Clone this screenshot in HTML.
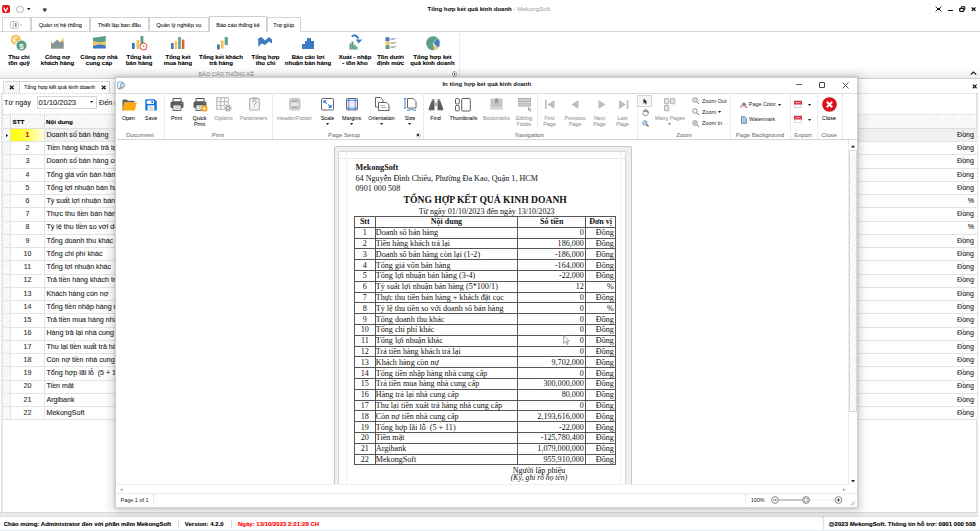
<!DOCTYPE html>
<html><head><meta charset="utf-8">
<style>
*{box-sizing:border-box}
html,body{margin:0;padding:0}
body{width:980px;height:531px;overflow:hidden;position:relative;background:#fff;font-family:"Liberation Sans",sans-serif;color:#222}
.a{position:absolute}
.t{position:absolute;white-space:pre;line-height:1}
.c{transform:translateX(-50%)}
svg{position:absolute;overflow:visible}
/* tabs */
.tab{position:absolute;top:17px;height:15px;border:1px solid #d4d4d4;border-bottom:none;background:#fff;font-size:5.6px;text-align:center;line-height:14px;color:#111;-webkit-text-stroke:0.06px #111}
.rl{position:absolute;font-weight:bold;font-size:6px;line-height:6.3px;text-align:center;white-space:nowrap;color:#000;-webkit-text-stroke:0.1px #000;transform:translateX(-50%);top:54px}
.tl{position:absolute;font-size:5.4px;line-height:6.8px;text-align:center;white-space:nowrap;color:#111;-webkit-text-stroke:0.06px #111;transform:translateX(-50%);top:115px}
.tl.g{color:#a0a0a0;-webkit-text-stroke:0.1px #a0a0a0}
.gl{position:absolute;font-size:6.1px;line-height:6px;white-space:nowrap;color:#7c7c7c;-webkit-text-stroke:0.08px #7c7c7c;transform:translateX(-50%);top:132.5px}
.sep{position:absolute;top:95px;height:44px;width:0;border-left:1px dotted #d0d0d0}
.grow{position:absolute;left:3px;width:974px;height:13.27px;border-bottom:1px solid #e3e3e3;font-size:7px}
</style></head><body>

<!-- ===== TITLE BAR ===== -->
<div class="a" style="left:2px;top:5px;width:8px;height:8px;background:#e3141c;border-radius:2px"></div>
<svg style="left:3.3px;top:6.8px" width="6" height="5"><path d="M0.6 0.5L2.7 4.3L4.8 0.5" fill="none" stroke="#fff" stroke-width="1.3"/></svg>
<div class="a" style="left:16px;top:5.5px;width:7.5px;height:7.5px;border:0.8px solid #b5b5b5;border-radius:50%"></div>
<svg style="left:27px;top:8px" width="4" height="3"><path d="M0 0H3.5L1.75 2.2Z" fill="#222"/></svg>
<svg style="left:43px;top:7.5px" width="4" height="4"><path d="M0 0.6H3.6M0 1.4H3.6L1.8 3.6Z" stroke="#222" stroke-width="0.6" fill="#222"/></svg>
<div class="t" style="left:427.5px;top:6px;font-size:6px;color:#111"><b style="-webkit-text-stroke:0.08px #111">Tổng hợp kết quả kinh doanh</b> <span style="color:#9a9a9a;font-size:6.2px">- MekongSoft</span></div>
<!-- window controls -->
<svg style="left:935px;top:6px" width="7" height="6"><path d="M0.6 0.6L2.4 2.2M6.4 0.6L4.6 2.2M0.6 5.4L2.4 3.8M6.4 5.4L4.6 3.8" stroke="#111" stroke-width="0.9"/><rect x="2" y="2" width="3" height="2" fill="#111"/></svg>
<div class="a" style="left:947.8px;top:9.6px;width:4.8px;height:1.3px;background:#111"></div>
<svg style="left:959px;top:5.8px" width="7" height="6"><path d="M2.5 1.8V0.7H5.8V3.6H4.8" fill="none" stroke="#111" stroke-width="1"/><rect x="0.7" y="2.3" width="4" height="3" rx="0.5" fill="none" stroke="#111" stroke-width="1.2"/></svg>
<svg style="left:971px;top:6.8px" width="6" height="5"><path d="M0.7 0.5L4.5 3.8M4.5 0.5L0.7 3.8" stroke="#111" stroke-width="1.2"/></svg>

<!-- ===== TABS ===== -->
<div class="tab" style="left:2px;width:28.5px"><svg style="left:7px;top:2.5px" width="14" height="8"><rect x="0.5" y="0.5" width="8" height="7" rx="1.8" fill="none" stroke="#bbb" stroke-width="0.8"/><path d="M3.3 0.5V7.5" stroke="#999" stroke-width="0.7"/><rect x="5" y="2" width="1.6" height="4" fill="#888"/><path d="M9.8 3.2L11 4.6L12.2 3.2" fill="none" stroke="#aaa" stroke-width="0.6"/></svg></div>
<div class="tab" style="left:31px;width:58.5px">Quản trị hệ thống</div>
<div class="tab" style="left:90px;width:58.5px">Thiết lập ban đầu</div>
<div class="tab" style="left:148.5px;width:60.5px">Quản lý nghiệp vụ</div>
<div class="a" style="left:0;top:31px;width:980px;height:1px;background:#d4d4d4"></div>
<div class="tab" style="left:209px;width:58px;top:16px;height:16px;line-height:16px;border-color:#cfcfcf">Báo cáo thống kê</div>
<div class="tab" style="left:267px;width:33.5px">Trợ giúp</div>

<!-- ===== RIBBON ===== -->
<div class="a" style="left:0;top:67px;width:980px;height:11px;background:linear-gradient(#fff,#ededed)"></div>
<div class="a" style="left:0;top:78px;width:980px;height:1px;background:#cfcfcf"></div>
<div class="t" style="left:198.5px;top:71.5px;font-size:5.4px;color:#999;letter-spacing:0.1px;-webkit-text-stroke:0.1px #999">BÁO CÁO THỐNG KÊ</div>
<div class="a" style="left:459px;top:34px;width:0;height:42px;border-left:1px dotted #d8d8d8"></div>
<div class="a" style="left:451.8px;top:71.3px;width:5.5px;height:5.5px;border:0.7px solid #aaa;border-radius:50%"></div>
<div class="a" style="left:453.9px;top:73.4px;width:1.3px;height:1.3px;background:#222;border-radius:50%"></div>
<svg style="left:970px;top:70.5px" width="7" height="4"><path d="M0.8 3.5L3.5 1L6.2 3.5" fill="none" stroke="#222" stroke-width="1.2"/></svg>
<div id="ribbon"></div>
<svg style="left:10px;top:33.5px" width="18" height="18"><circle cx="5.8" cy="5.8" r="5" fill="#f2c45a"/><path d="M7.3 3.6A2.6 2.6 0 1 0 7.3 8" fill="none" stroke="#fff" stroke-width="0.9"/><path d="M3.6 5.2H6.2M3.6 6.4H6.2" stroke="#fff" stroke-width="0.6"/><circle cx="11.5" cy="11.5" r="5.4" fill="#5a9e86" stroke="#fff" stroke-width="0.7"/><text x="11.5" y="14.5" font-size="8" font-weight="bold" fill="#fff" text-anchor="middle" font-family="Liberation Sans">$</text></svg>
<div class="rl" style="left:19px">Thu chi<br>tồn quỹ</div>
<svg style="left:51px;top:37px" width="13" height="12"><path d="M0 4L2.3 6.8L6 2.5L9 4.8L12.5 0.5V8H0Z" fill="#f0c55a"/><path d="M1.5 6.5L6 2.8L9 5.3L12.5 4.5V11.5H0Z" fill="#7fa6cf"/><path d="M0 6.8L2.5 6.3L6 3.8L9.2 6L12.5 4.8V11.5H0Z" fill="#889696"/></svg>
<div class="rl" style="left:57.5px">Công nợ<br>khách hàng</div>
<svg style="left:92.7px;top:36px" width="13" height="13"><path d="M0 1.8L12.8 0V5.5L6.5 6.8L0 5.2Z" fill="#5c9e86"/><path d="M0 5.2L6.5 6.8L12.8 5.5V9.5L6.5 8.3L0 9.8Z" fill="#f2c45a"/><path d="M0 9.8L6.5 8.3L12.8 9.5V12.6H0Z" fill="#3b78c4"/></svg>
<div class="rl" style="left:99px">Công nợ nhà<br>cung cấp</div>
<svg style="left:132px;top:36px" width="17" height="16"><rect x="0" y="7" width="2.8" height="6" fill="#3b78c4"/><rect x="4.5" y="4" width="2.9" height="9" fill="#f2c45a"/><rect x="8.5" y="0" width="2.9" height="10" fill="#5c9e86"/><circle cx="11.5" cy="10.5" r="3.5" fill="#fff" stroke="#e0493a" stroke-width="1"/><path d="M11.2 9V10.8H12.5" stroke="#555" stroke-width="0.6" fill="none"/></svg>
<div class="rl" style="left:139px">Tổng kết<br>bán hàng</div>
<svg style="left:171px;top:36px" width="14" height="14"><rect x="0" y="7" width="2.6" height="6" fill="#3b78c4"/><rect x="3.6" y="5" width="2.6" height="8" fill="#f2c45a"/><rect x="7.2" y="1" width="2.6" height="12" fill="#5c9e86"/><rect x="10.8" y="3.5" width="2.6" height="9.5" fill="#e0603a"/></svg>
<div class="rl" style="left:178px">Tổng kết<br>mua hàng</div>
<svg style="left:217.4px;top:36.5px" width="12" height="13"><rect x="0" y="7.5" width="2.7" height="5" fill="#3b78c4"/><rect x="3.7" y="3.5" width="2.9" height="8" fill="#f2c45a"/><rect x="7.7" y="0" width="3.1" height="8" fill="#5c9e86"/></svg>
<div class="rl" style="left:221px">Tổng kết khách<br>trả hàng</div>
<svg style="left:258px;top:37px" width="15" height="11"><path d="M0 1.5L3.5 0L7 3.5L11 0L14 2.5V6.5L11 4.5L7 8L3.5 6.5L0.5 10Z" fill="#3e7bc2"/></svg>
<div class="rl" style="left:265.5px">Tổng hợp<br>thu chi</div>
<svg style="left:302px;top:38px" width="13" height="11"><path d="M0 11V6H3V3H5V0H9V3H12V11Z" fill="#3e7bc2"/></svg>
<div class="rl" style="left:308px">Báo cáo lợi<br>nhuận bán hàng</div>
<svg style="left:348.5px;top:33.5px" width="15" height="17"><path d="M0.5 15.5V9.5H2.5V7.5H4.5V10.8H6.5V12.5H8.5V15.5Z" fill="#5e9e86"/><path d="M2.5 9V15.5M4.5 10V15.5M6.5 12V15.5" stroke="#b9d8cc" stroke-width="0.4"/><path d="M2.8 2.6Q6 -0.5 9.5 4.5" fill="none" stroke="#3e7bc2" stroke-width="1.9"/><path d="M6.5 5.5L13 5.5L9.8 9.5Z" fill="#3e7bc2"/></svg>
<div class="rl" style="left:355px">Xuất - nhập<br>- tồn kho</div>
<svg style="left:384.5px;top:36.8px" width="13" height="13"><rect x="0.5" y="0.2" width="4" height="3.8" fill="#3e7bc2"/><rect x="0.5" y="4.2" width="4" height="3.8" fill="#f2c45a"/><rect x="0.5" y="8.2" width="4" height="3.8" fill="#5e9e86"/><path d="M5.5 1.6H11.5M5.5 2.6H9.5M5.5 5.6H11.5M5.5 6.6H9.5M5.5 9.6H11.5M5.5 10.6H9.5" stroke="#777" stroke-width="0.55"/></svg>
<div class="rl" style="left:390.5px">Tồn dưới<br>định mức</div>
<svg style="left:425.8px;top:35.6px" width="15" height="15"><circle cx="7.2" cy="7.2" r="7" fill="#5c9e86"/><path d="M7.2 7.2L11.5 2A7 7 0 0 1 12.2 12Z" fill="#3e7bc2" stroke="#fff" stroke-width="0.5"/><path d="M7.2 7.2L12.2 12A7 7 0 0 1 8.5 14.2Z" fill="#f2c45a" stroke="#fff" stroke-width="0.5"/></svg>
<div class="rl" style="left:432.5px">Tổng hợp kết<br>quả kinh doanh</div>

<!-- ===== DOC TABS ===== -->

<div class="a" style="left:2.5px;top:81px;width:17px;height:12px;border:1px solid #d8d8d8;border-bottom:none;background:repeating-linear-gradient(135deg,#f2f2f2 0 1.2px,#fafafa 1.2px 2.4px)"></div>
<svg style="left:8.5px;top:84.5px" width="6" height="5"><path d="M0.8 0.6L4.6 4.2M4.6 0.6L0.8 4.2" stroke="#111" stroke-width="1.2"/></svg>
<div class="a" style="left:19px;top:80.5px;width:90.5px;height:12.5px;border:1px solid #d4d4d4;border-bottom:none;background:#fff"></div>
<div class="t" style="left:24px;top:84.5px;font-size:5.45px;color:#1e1e1e;-webkit-text-stroke:0.08px #1e1e1e">Tổng hợp kết quả kinh doanh</div>
<svg style="left:101px;top:84.5px" width="6" height="5"><path d="M0.8 0.6L4.6 4.2M4.6 0.6L0.8 4.2" stroke="#111" stroke-width="1.2"/></svg>
<svg style="left:971.5px;top:84px" width="6" height="5"><path d="M0.8 0.6L4.6 4.2M4.6 0.6L0.8 4.2" stroke="#111" stroke-width="1.2"/></svg>
<div class="a" style="left:3px;top:92.5px;width:974px;height:0;border-top:1px dotted #cfcfcf"></div>
<!-- filter panel -->
<div class="t" style="left:4px;top:98.8px;font-size:7.2px;color:#1e1e1e;-webkit-text-stroke:0.08px #1e1e1e">Từ ngày</div>
<div class="a" style="left:36.5px;top:96px;width:60.5px;height:12.5px;border:1px solid #d6d6d6;background:#fff"></div>
<div class="t" style="left:38.5px;top:98.5px;font-size:7.5px;color:#1e1e1e;-webkit-text-stroke:0.08px #1e1e1e">01/10/2023</div>
<svg style="left:90px;top:101px" width="4" height="3"><path d="M0 0H3.2L1.6 2Z" fill="#222"/></svg>
<div class="t" style="left:99px;top:98.8px;font-size:7.2px;color:#1e1e1e;-webkit-text-stroke:0.08px #1e1e1e">Đến ngày</div>
<div class="a" style="left:3px;top:113.5px;width:974px;height:0;border-top:1px dotted #cfcfcf"></div>


<!-- ===== GRID ===== -->
<div class="a" style="left:3px;top:114.5px;width:7.5px;height:305.78000000000003px;background:repeating-linear-gradient(135deg,#f4f4f4 0 1.2px,#fbfbfb 1.2px 2.4px)"></div>
<div class="a" style="left:3px;top:114.5px;width:974px;height:14.5px;background:repeating-linear-gradient(135deg,#f4f4f4 0 1.2px,#fbfbfb 1.2px 2.4px);border-bottom:1px solid #dcdcdc"></div>
<div class="a" style="left:10px;top:114.5px;width:1px;height:14px;background:#e0e0e0"></div><div class="a" style="left:44px;top:114.5px;width:1px;height:14px;background:#e0e0e0"></div>
<div class="t" style="left:12.5px;top:119px;font-size:6.2px;font-weight:bold;color:#000;-webkit-text-stroke:0.12px #000">STT</div>
<div class="t" style="left:46px;top:119px;font-size:6.2px;font-weight:bold;color:#000;-webkit-text-stroke:0.12px #000">Nội dung</div>
<div class="a" style="left:1px;top:92.5px;width:2px;height:420px;border-left:1px dotted #cfcfcf;border-right:1px solid #e6e6e6"></div>
<div class="a" style="left:976px;top:92.5px;width:2px;height:420px;border-left:1px solid #e3e3e3;border-right:1px dotted #cfcfcf"></div>
<div class="a" style="left:10.5px;top:129.00px;width:966px;height:13.24px;background:#f0f0f0;border-bottom:1px solid #e4e4e4"></div>
<div class="a" style="left:3px;top:129.00px;width:7.5px;height:13.24px;border-bottom:1px solid #e4e4e4"></div>
<div class="a" style="left:10.5px;top:129.00px;width:34px;height:12.24px;background:linear-gradient(90deg,#ffff00 0%,#ffff40 40%,#ffffe8 100%)"></div>
<svg style="left:5.5px;top:134.20px" width="3" height="4"><path d="M0 0L2 1.6L0 3.2Z" fill="#111"/></svg>
<div class="t" style="left:27.5px;top:131.80px;font-size:7.1px;color:#e00000;font-weight:bold;-webkit-text-stroke:0.1px #e00000" ><span class="c" style="display:inline-block">1</span></div>
<div class="t" style="left:46.5px;top:131.80px;font-size:7.1px;color:#1e1e1e;-webkit-text-stroke:0.1px #1e1e1e">Doanh số bán hàng</div>
<div class="t" style="right:6px;top:131.80px;font-size:7.1px;color:#1e1e1e;-webkit-text-stroke:0.1px #1e1e1e">Đồng</div>
<div class="a" style="left:44px;top:129.00px;width:1px;height:13.24px;background:#e4e4e4"></div>
<div class="a" style="left:10px;top:129.00px;width:1px;height:13.24px;background:#e4e4e4"></div>
<div class="a" style="left:10.5px;top:142.24px;width:966px;height:13.24px;background:#fff;border-bottom:1px solid #e4e4e4"></div>
<div class="a" style="left:3px;top:142.24px;width:7.5px;height:13.24px;border-bottom:1px solid #e4e4e4"></div>
<div class="t" style="left:27.5px;top:145.04px;font-size:7.1px;color:#333;font-weight:normal;-webkit-text-stroke:0.1px #333" ><span class="c" style="display:inline-block">2</span></div>
<div class="t" style="left:46.5px;top:145.04px;font-size:7.1px;color:#1e1e1e;-webkit-text-stroke:0.1px #1e1e1e">Tiền hàng khách trả lại</div>
<div class="t" style="right:6px;top:145.04px;font-size:7.1px;color:#1e1e1e;-webkit-text-stroke:0.1px #1e1e1e">Đồng</div>
<div class="a" style="left:44px;top:142.24px;width:1px;height:13.24px;background:#e4e4e4"></div>
<div class="a" style="left:10px;top:142.24px;width:1px;height:13.24px;background:#e4e4e4"></div>
<div class="a" style="left:10.5px;top:155.48px;width:966px;height:13.24px;background:#fff;border-bottom:1px solid #e4e4e4"></div>
<div class="a" style="left:3px;top:155.48px;width:7.5px;height:13.24px;border-bottom:1px solid #e4e4e4"></div>
<div class="t" style="left:27.5px;top:158.28px;font-size:7.1px;color:#333;font-weight:normal;-webkit-text-stroke:0.1px #333" ><span class="c" style="display:inline-block">3</span></div>
<div class="t" style="left:46.5px;top:158.28px;font-size:7.1px;color:#1e1e1e;-webkit-text-stroke:0.1px #1e1e1e">Doanh số bán hàng còn lại (1-2)</div>
<div class="t" style="right:6px;top:158.28px;font-size:7.1px;color:#1e1e1e;-webkit-text-stroke:0.1px #1e1e1e">Đồng</div>
<div class="a" style="left:44px;top:155.48px;width:1px;height:13.24px;background:#e4e4e4"></div>
<div class="a" style="left:10px;top:155.48px;width:1px;height:13.24px;background:#e4e4e4"></div>
<div class="a" style="left:10.5px;top:168.72px;width:966px;height:13.24px;background:#fff;border-bottom:1px solid #e4e4e4"></div>
<div class="a" style="left:3px;top:168.72px;width:7.5px;height:13.24px;border-bottom:1px solid #e4e4e4"></div>
<div class="t" style="left:27.5px;top:171.52px;font-size:7.1px;color:#333;font-weight:normal;-webkit-text-stroke:0.1px #333" ><span class="c" style="display:inline-block">4</span></div>
<div class="t" style="left:46.5px;top:171.52px;font-size:7.1px;color:#1e1e1e;-webkit-text-stroke:0.1px #1e1e1e">Tổng giá vốn bán hàng</div>
<div class="t" style="right:6px;top:171.52px;font-size:7.1px;color:#1e1e1e;-webkit-text-stroke:0.1px #1e1e1e">Đồng</div>
<div class="a" style="left:44px;top:168.72px;width:1px;height:13.24px;background:#e4e4e4"></div>
<div class="a" style="left:10px;top:168.72px;width:1px;height:13.24px;background:#e4e4e4"></div>
<div class="a" style="left:10.5px;top:181.96px;width:966px;height:13.24px;background:#fff;border-bottom:1px solid #e4e4e4"></div>
<div class="a" style="left:3px;top:181.96px;width:7.5px;height:13.24px;border-bottom:1px solid #e4e4e4"></div>
<div class="t" style="left:27.5px;top:184.76px;font-size:7.1px;color:#333;font-weight:normal;-webkit-text-stroke:0.1px #333" ><span class="c" style="display:inline-block">5</span></div>
<div class="t" style="left:46.5px;top:184.76px;font-size:7.1px;color:#1e1e1e;-webkit-text-stroke:0.1px #1e1e1e">Tổng lợi nhuận bán hàng (3-4)</div>
<div class="t" style="right:6px;top:184.76px;font-size:7.1px;color:#1e1e1e;-webkit-text-stroke:0.1px #1e1e1e">Đồng</div>
<div class="a" style="left:44px;top:181.96px;width:1px;height:13.24px;background:#e4e4e4"></div>
<div class="a" style="left:10px;top:181.96px;width:1px;height:13.24px;background:#e4e4e4"></div>
<div class="a" style="left:10.5px;top:195.20px;width:966px;height:13.24px;background:#fff;border-bottom:1px solid #e4e4e4"></div>
<div class="a" style="left:3px;top:195.20px;width:7.5px;height:13.24px;border-bottom:1px solid #e4e4e4"></div>
<div class="t" style="left:27.5px;top:198.00px;font-size:7.1px;color:#333;font-weight:normal;-webkit-text-stroke:0.1px #333" ><span class="c" style="display:inline-block">6</span></div>
<div class="t" style="left:46.5px;top:198.00px;font-size:7.1px;color:#1e1e1e;-webkit-text-stroke:0.1px #1e1e1e">Tỷ suất lợi nhuận bán hàng (5*100/1)</div>
<div class="t" style="right:6px;top:198.00px;font-size:7.1px;color:#1e1e1e;-webkit-text-stroke:0.1px #1e1e1e">%</div>
<div class="a" style="left:44px;top:195.20px;width:1px;height:13.24px;background:#e4e4e4"></div>
<div class="a" style="left:10px;top:195.20px;width:1px;height:13.24px;background:#e4e4e4"></div>
<div class="a" style="left:10.5px;top:208.44px;width:966px;height:13.24px;background:#fff;border-bottom:1px solid #e4e4e4"></div>
<div class="a" style="left:3px;top:208.44px;width:7.5px;height:13.24px;border-bottom:1px solid #e4e4e4"></div>
<div class="t" style="left:27.5px;top:211.24px;font-size:7.1px;color:#333;font-weight:normal;-webkit-text-stroke:0.1px #333" ><span class="c" style="display:inline-block">7</span></div>
<div class="t" style="left:46.5px;top:211.24px;font-size:7.1px;color:#1e1e1e;-webkit-text-stroke:0.1px #1e1e1e">Thực thu tiền bán hàng + khách đặt cọc</div>
<div class="t" style="right:6px;top:211.24px;font-size:7.1px;color:#1e1e1e;-webkit-text-stroke:0.1px #1e1e1e">Đồng</div>
<div class="a" style="left:44px;top:208.44px;width:1px;height:13.24px;background:#e4e4e4"></div>
<div class="a" style="left:10px;top:208.44px;width:1px;height:13.24px;background:#e4e4e4"></div>
<div class="a" style="left:10.5px;top:221.68px;width:966px;height:13.24px;background:#fff;border-bottom:1px solid #e4e4e4"></div>
<div class="a" style="left:3px;top:221.68px;width:7.5px;height:13.24px;border-bottom:1px solid #e4e4e4"></div>
<div class="t" style="left:27.5px;top:224.48px;font-size:7.1px;color:#333;font-weight:normal;-webkit-text-stroke:0.1px #333" ><span class="c" style="display:inline-block">8</span></div>
<div class="t" style="left:46.5px;top:224.48px;font-size:7.1px;color:#1e1e1e;-webkit-text-stroke:0.1px #1e1e1e">Tỷ lệ thu tiền so với doanh số bán hàng</div>
<div class="t" style="right:6px;top:224.48px;font-size:7.1px;color:#1e1e1e;-webkit-text-stroke:0.1px #1e1e1e">%</div>
<div class="a" style="left:44px;top:221.68px;width:1px;height:13.24px;background:#e4e4e4"></div>
<div class="a" style="left:10px;top:221.68px;width:1px;height:13.24px;background:#e4e4e4"></div>
<div class="a" style="left:10.5px;top:234.92px;width:966px;height:13.24px;background:#fff;border-bottom:1px solid #e4e4e4"></div>
<div class="a" style="left:3px;top:234.92px;width:7.5px;height:13.24px;border-bottom:1px solid #e4e4e4"></div>
<div class="t" style="left:27.5px;top:237.72px;font-size:7.1px;color:#333;font-weight:normal;-webkit-text-stroke:0.1px #333" ><span class="c" style="display:inline-block">9</span></div>
<div class="t" style="left:46.5px;top:237.72px;font-size:7.1px;color:#1e1e1e;-webkit-text-stroke:0.1px #1e1e1e">Tổng doanh thu khác</div>
<div class="t" style="right:6px;top:237.72px;font-size:7.1px;color:#1e1e1e;-webkit-text-stroke:0.1px #1e1e1e">Đồng</div>
<div class="a" style="left:44px;top:234.92px;width:1px;height:13.24px;background:#e4e4e4"></div>
<div class="a" style="left:10px;top:234.92px;width:1px;height:13.24px;background:#e4e4e4"></div>
<div class="a" style="left:10.5px;top:248.16px;width:966px;height:13.24px;background:#fff;border-bottom:1px solid #e4e4e4"></div>
<div class="a" style="left:3px;top:248.16px;width:7.5px;height:13.24px;border-bottom:1px solid #e4e4e4"></div>
<div class="t" style="left:27.5px;top:250.96px;font-size:7.1px;color:#333;font-weight:normal;-webkit-text-stroke:0.1px #333" ><span class="c" style="display:inline-block">10</span></div>
<div class="t" style="left:46.5px;top:250.96px;font-size:7.1px;color:#1e1e1e;-webkit-text-stroke:0.1px #1e1e1e">Tổng chi phí khác</div>
<div class="t" style="right:6px;top:250.96px;font-size:7.1px;color:#1e1e1e;-webkit-text-stroke:0.1px #1e1e1e">Đồng</div>
<div class="a" style="left:44px;top:248.16px;width:1px;height:13.24px;background:#e4e4e4"></div>
<div class="a" style="left:10px;top:248.16px;width:1px;height:13.24px;background:#e4e4e4"></div>
<div class="a" style="left:10.5px;top:261.40px;width:966px;height:13.24px;background:#fff;border-bottom:1px solid #e4e4e4"></div>
<div class="a" style="left:3px;top:261.40px;width:7.5px;height:13.24px;border-bottom:1px solid #e4e4e4"></div>
<div class="t" style="left:27.5px;top:264.20px;font-size:7.1px;color:#333;font-weight:normal;-webkit-text-stroke:0.1px #333" ><span class="c" style="display:inline-block">11</span></div>
<div class="t" style="left:46.5px;top:264.20px;font-size:7.1px;color:#1e1e1e;-webkit-text-stroke:0.1px #1e1e1e">Tổng lợi nhuận khác</div>
<div class="t" style="right:6px;top:264.20px;font-size:7.1px;color:#1e1e1e;-webkit-text-stroke:0.1px #1e1e1e">Đồng</div>
<div class="a" style="left:44px;top:261.40px;width:1px;height:13.24px;background:#e4e4e4"></div>
<div class="a" style="left:10px;top:261.40px;width:1px;height:13.24px;background:#e4e4e4"></div>
<div class="a" style="left:10.5px;top:274.64px;width:966px;height:13.24px;background:#fff;border-bottom:1px solid #e4e4e4"></div>
<div class="a" style="left:3px;top:274.64px;width:7.5px;height:13.24px;border-bottom:1px solid #e4e4e4"></div>
<div class="t" style="left:27.5px;top:277.44px;font-size:7.1px;color:#333;font-weight:normal;-webkit-text-stroke:0.1px #333" ><span class="c" style="display:inline-block">12</span></div>
<div class="t" style="left:46.5px;top:277.44px;font-size:7.1px;color:#1e1e1e;-webkit-text-stroke:0.1px #1e1e1e">Trả tiền hàng khách trả lại</div>
<div class="t" style="right:6px;top:277.44px;font-size:7.1px;color:#1e1e1e;-webkit-text-stroke:0.1px #1e1e1e">Đồng</div>
<div class="a" style="left:44px;top:274.64px;width:1px;height:13.24px;background:#e4e4e4"></div>
<div class="a" style="left:10px;top:274.64px;width:1px;height:13.24px;background:#e4e4e4"></div>
<div class="a" style="left:10.5px;top:287.88px;width:966px;height:13.24px;background:#fff;border-bottom:1px solid #e4e4e4"></div>
<div class="a" style="left:3px;top:287.88px;width:7.5px;height:13.24px;border-bottom:1px solid #e4e4e4"></div>
<div class="t" style="left:27.5px;top:290.68px;font-size:7.1px;color:#333;font-weight:normal;-webkit-text-stroke:0.1px #333" ><span class="c" style="display:inline-block">13</span></div>
<div class="t" style="left:46.5px;top:290.68px;font-size:7.1px;color:#1e1e1e;-webkit-text-stroke:0.1px #1e1e1e">Khách hàng còn nợ</div>
<div class="t" style="right:6px;top:290.68px;font-size:7.1px;color:#1e1e1e;-webkit-text-stroke:0.1px #1e1e1e">Đồng</div>
<div class="a" style="left:44px;top:287.88px;width:1px;height:13.24px;background:#e4e4e4"></div>
<div class="a" style="left:10px;top:287.88px;width:1px;height:13.24px;background:#e4e4e4"></div>
<div class="a" style="left:10.5px;top:301.12px;width:966px;height:13.24px;background:#fff;border-bottom:1px solid #e4e4e4"></div>
<div class="a" style="left:3px;top:301.12px;width:7.5px;height:13.24px;border-bottom:1px solid #e4e4e4"></div>
<div class="t" style="left:27.5px;top:303.92px;font-size:7.1px;color:#333;font-weight:normal;-webkit-text-stroke:0.1px #333" ><span class="c" style="display:inline-block">14</span></div>
<div class="t" style="left:46.5px;top:303.92px;font-size:7.1px;color:#1e1e1e;-webkit-text-stroke:0.1px #1e1e1e">Tổng tiền nhập hàng nhà cung cấp</div>
<div class="t" style="right:6px;top:303.92px;font-size:7.1px;color:#1e1e1e;-webkit-text-stroke:0.1px #1e1e1e">Đồng</div>
<div class="a" style="left:44px;top:301.12px;width:1px;height:13.24px;background:#e4e4e4"></div>
<div class="a" style="left:10px;top:301.12px;width:1px;height:13.24px;background:#e4e4e4"></div>
<div class="a" style="left:10.5px;top:314.36px;width:966px;height:13.24px;background:#fff;border-bottom:1px solid #e4e4e4"></div>
<div class="a" style="left:3px;top:314.36px;width:7.5px;height:13.24px;border-bottom:1px solid #e4e4e4"></div>
<div class="t" style="left:27.5px;top:317.16px;font-size:7.1px;color:#333;font-weight:normal;-webkit-text-stroke:0.1px #333" ><span class="c" style="display:inline-block">15</span></div>
<div class="t" style="left:46.5px;top:317.16px;font-size:7.1px;color:#1e1e1e;-webkit-text-stroke:0.1px #1e1e1e">Trả tiền mua hàng nhà cung cấp</div>
<div class="t" style="right:6px;top:317.16px;font-size:7.1px;color:#1e1e1e;-webkit-text-stroke:0.1px #1e1e1e">Đồng</div>
<div class="a" style="left:44px;top:314.36px;width:1px;height:13.24px;background:#e4e4e4"></div>
<div class="a" style="left:10px;top:314.36px;width:1px;height:13.24px;background:#e4e4e4"></div>
<div class="a" style="left:10.5px;top:327.60px;width:966px;height:13.24px;background:#fff;border-bottom:1px solid #e4e4e4"></div>
<div class="a" style="left:3px;top:327.60px;width:7.5px;height:13.24px;border-bottom:1px solid #e4e4e4"></div>
<div class="t" style="left:27.5px;top:330.40px;font-size:7.1px;color:#333;font-weight:normal;-webkit-text-stroke:0.1px #333" ><span class="c" style="display:inline-block">16</span></div>
<div class="t" style="left:46.5px;top:330.40px;font-size:7.1px;color:#1e1e1e;-webkit-text-stroke:0.1px #1e1e1e">Hàng trả lại nhà cung cấp</div>
<div class="t" style="right:6px;top:330.40px;font-size:7.1px;color:#1e1e1e;-webkit-text-stroke:0.1px #1e1e1e">Đồng</div>
<div class="a" style="left:44px;top:327.60px;width:1px;height:13.24px;background:#e4e4e4"></div>
<div class="a" style="left:10px;top:327.60px;width:1px;height:13.24px;background:#e4e4e4"></div>
<div class="a" style="left:10.5px;top:340.84px;width:966px;height:13.24px;background:#fff;border-bottom:1px solid #e4e4e4"></div>
<div class="a" style="left:3px;top:340.84px;width:7.5px;height:13.24px;border-bottom:1px solid #e4e4e4"></div>
<div class="t" style="left:27.5px;top:343.64px;font-size:7.1px;color:#333;font-weight:normal;-webkit-text-stroke:0.1px #333" ><span class="c" style="display:inline-block">17</span></div>
<div class="t" style="left:46.5px;top:343.64px;font-size:7.1px;color:#1e1e1e;-webkit-text-stroke:0.1px #1e1e1e">Thu lại tiền xuất trả hàng nhà cung cấp</div>
<div class="t" style="right:6px;top:343.64px;font-size:7.1px;color:#1e1e1e;-webkit-text-stroke:0.1px #1e1e1e">Đồng</div>
<div class="a" style="left:44px;top:340.84px;width:1px;height:13.24px;background:#e4e4e4"></div>
<div class="a" style="left:10px;top:340.84px;width:1px;height:13.24px;background:#e4e4e4"></div>
<div class="a" style="left:10.5px;top:354.08px;width:966px;height:13.24px;background:#fff;border-bottom:1px solid #e4e4e4"></div>
<div class="a" style="left:3px;top:354.08px;width:7.5px;height:13.24px;border-bottom:1px solid #e4e4e4"></div>
<div class="t" style="left:27.5px;top:356.88px;font-size:7.1px;color:#333;font-weight:normal;-webkit-text-stroke:0.1px #333" ><span class="c" style="display:inline-block">18</span></div>
<div class="t" style="left:46.5px;top:356.88px;font-size:7.1px;color:#1e1e1e;-webkit-text-stroke:0.1px #1e1e1e">Còn nợ tiền nhà cung cấp</div>
<div class="t" style="right:6px;top:356.88px;font-size:7.1px;color:#1e1e1e;-webkit-text-stroke:0.1px #1e1e1e">Đồng</div>
<div class="a" style="left:44px;top:354.08px;width:1px;height:13.24px;background:#e4e4e4"></div>
<div class="a" style="left:10px;top:354.08px;width:1px;height:13.24px;background:#e4e4e4"></div>
<div class="a" style="left:10.5px;top:367.32px;width:966px;height:13.24px;background:#fff;border-bottom:1px solid #e4e4e4"></div>
<div class="a" style="left:3px;top:367.32px;width:7.5px;height:13.24px;border-bottom:1px solid #e4e4e4"></div>
<div class="t" style="left:27.5px;top:370.12px;font-size:7.1px;color:#333;font-weight:normal;-webkit-text-stroke:0.1px #333" ><span class="c" style="display:inline-block">19</span></div>
<div class="t" style="left:46.5px;top:370.12px;font-size:7.1px;color:#1e1e1e;-webkit-text-stroke:0.1px #1e1e1e">Tổng hợp lãi lỗ  (5 + 11)</div>
<div class="t" style="right:6px;top:370.12px;font-size:7.1px;color:#1e1e1e;-webkit-text-stroke:0.1px #1e1e1e">Đồng</div>
<div class="a" style="left:44px;top:367.32px;width:1px;height:13.24px;background:#e4e4e4"></div>
<div class="a" style="left:10px;top:367.32px;width:1px;height:13.24px;background:#e4e4e4"></div>
<div class="a" style="left:10.5px;top:380.56px;width:966px;height:13.24px;background:#fff;border-bottom:1px solid #e4e4e4"></div>
<div class="a" style="left:3px;top:380.56px;width:7.5px;height:13.24px;border-bottom:1px solid #e4e4e4"></div>
<div class="t" style="left:27.5px;top:383.36px;font-size:7.1px;color:#333;font-weight:normal;-webkit-text-stroke:0.1px #333" ><span class="c" style="display:inline-block">20</span></div>
<div class="t" style="left:46.5px;top:383.36px;font-size:7.1px;color:#1e1e1e;-webkit-text-stroke:0.1px #1e1e1e">Tiền mặt</div>
<div class="t" style="right:6px;top:383.36px;font-size:7.1px;color:#1e1e1e;-webkit-text-stroke:0.1px #1e1e1e">Đồng</div>
<div class="a" style="left:44px;top:380.56px;width:1px;height:13.24px;background:#e4e4e4"></div>
<div class="a" style="left:10px;top:380.56px;width:1px;height:13.24px;background:#e4e4e4"></div>
<div class="a" style="left:10.5px;top:393.80px;width:966px;height:13.24px;background:#fff;border-bottom:1px solid #e4e4e4"></div>
<div class="a" style="left:3px;top:393.80px;width:7.5px;height:13.24px;border-bottom:1px solid #e4e4e4"></div>
<div class="t" style="left:27.5px;top:396.60px;font-size:7.1px;color:#333;font-weight:normal;-webkit-text-stroke:0.1px #333" ><span class="c" style="display:inline-block">21</span></div>
<div class="t" style="left:46.5px;top:396.60px;font-size:7.1px;color:#1e1e1e;-webkit-text-stroke:0.1px #1e1e1e">Argibank</div>
<div class="t" style="right:6px;top:396.60px;font-size:7.1px;color:#1e1e1e;-webkit-text-stroke:0.1px #1e1e1e">Đồng</div>
<div class="a" style="left:44px;top:393.80px;width:1px;height:13.24px;background:#e4e4e4"></div>
<div class="a" style="left:10px;top:393.80px;width:1px;height:13.24px;background:#e4e4e4"></div>
<div class="a" style="left:10.5px;top:407.04px;width:966px;height:13.24px;background:#fff;border-bottom:1px solid #e4e4e4"></div>
<div class="a" style="left:3px;top:407.04px;width:7.5px;height:13.24px;border-bottom:1px solid #e4e4e4"></div>
<div class="t" style="left:27.5px;top:409.84px;font-size:7.1px;color:#333;font-weight:normal;-webkit-text-stroke:0.1px #333" ><span class="c" style="display:inline-block">22</span></div>
<div class="t" style="left:46.5px;top:409.84px;font-size:7.1px;color:#1e1e1e;-webkit-text-stroke:0.1px #1e1e1e">MekongSoft</div>
<div class="t" style="right:6px;top:409.84px;font-size:7.1px;color:#1e1e1e;-webkit-text-stroke:0.1px #1e1e1e">Đồng</div>
<div class="a" style="left:44px;top:407.04px;width:1px;height:13.24px;background:#e4e4e4"></div>
<div class="a" style="left:10px;top:407.04px;width:1px;height:13.24px;background:#e4e4e4"></div>
<div class="a" style="left:0;top:512px;width:978px;height:4.5px;background:#ebebeb;border-top:1px dotted #cfcfcf;border-bottom:1px dotted #cfcfcf"></div>

<!-- ===== STATUS ===== -->

<div class="t" style="left:3.7px;top:520.6px;font-size:6px;font-weight:bold;color:#000;-webkit-text-stroke:0.1px #000">Chào mừng: Administrator đến với phần mềm MekongSoft</div>
<div class="a" style="left:177.5px;top:520px;width:1px;height:8px;background:#dcdcdc"></div>
<div class="t" style="left:184.8px;top:520.6px;font-size:6px;font-weight:bold;color:#000;-webkit-text-stroke:0.1px #000">Version: 4.2.0</div>
<div class="a" style="left:230.5px;top:520px;width:1px;height:8px;background:#dcdcdc"></div>
<div class="t" style="left:238px;top:520.6px;font-size:6px;font-weight:bold;color:#f00;-webkit-text-stroke:0.1px #f00">Ngày: 13/10/2023 2:21:28 CH</div>
<div class="a" style="left:823px;top:517px;width:0;height:14px;border-left:1px dotted #ccc"></div>
<div class="t" style="left:828.7px;top:520.6px;font-size:6.07px;font-weight:bold;color:#000;-webkit-text-stroke:0.1px #000">@2023 MekongSoft. Thông tin hỗ trợ: 0901 000 508</div>
<div class="a" style="left:0;top:530px;width:980px;height:1px;background:#e6ecf2"></div>


<!-- ===== DIALOG ===== -->
<div class="a" style="left:115px;top:76.5px;width:743px;height:431px;background:#fff;border:1px solid #d0d0d0;box-shadow:0 0 2px 1px rgba(0,0,0,0.1),0 2px 10px 2px rgba(0,0,0,0.17)"></div>
<svg style="left:117px;top:81px" width="9" height="9"><rect x="0.5" y="0.8" width="5.5" height="7" rx="1" fill="#eef4fb" stroke="#6a90cc" stroke-width="0.7"/><circle cx="5.6" cy="4.3" r="2.1" fill="#c4f2f4" stroke="#5c6c9c" stroke-width="0.7"/><path d="M4 6L1.8 8.3" stroke="#d88a30" stroke-width="1.3"/></svg>
<div class="t c" style="left:486.8px;top:82px;font-size:5.95px;font-weight:bold;color:#111">In tổng hợp kết quả kinh doanh</div>
<div class="a" style="left:796px;top:84.3px;width:5.5px;height:1.1px;background:#666"></div>
<div class="a" style="left:819px;top:81.8px;width:6px;height:5.8px;border:1px solid #444;border-radius:1px"></div>
<svg style="left:842px;top:82px" width="7" height="7"><path d="M0.5 0.5L6.5 6.5M6.5 0.5L0.5 6.5" stroke="#444" stroke-width="0.9"/></svg>
<div class="a" style="left:117px;top:92.5px;width:740px;height:1px;background:#dcdcdc"></div>
<div class="a" style="left:164px;top:95px;width:0;height:44px;border-left:1px dotted #dadada"></div>
<div class="a" style="left:272px;top:95px;width:0;height:44px;border-left:1px dotted #dadada"></div>
<div class="a" style="left:422.5px;top:95px;width:0;height:44px;border-left:1px dotted #dadada"></div>
<div class="a" style="left:636.5px;top:95px;width:0;height:44px;border-left:1px dotted #dadada"></div>
<div class="a" style="left:730px;top:95px;width:0;height:44px;border-left:1px dotted #dadada"></div>
<div class="a" style="left:789.5px;top:95px;width:0;height:44px;border-left:1px dotted #dadada"></div>
<div class="a" style="left:816.5px;top:95px;width:0;height:44px;border-left:1px dotted #dadada"></div>
<div class="a" style="left:841.5px;top:95px;width:0;height:44px;border-left:1px dotted #dadada"></div>
<div class="a" style="left:537px;top:95px;width:0;height:33px;border-left:1px dotted #dadada"></div>
<div class="gl" style="left:140px;top:132.3px;">Document</div>
<div class="gl" style="left:218px;top:132.3px;">Print</div>
<div class="gl" style="left:344px;top:132.3px;">Page Setup</div>
<div class="gl" style="left:529.5px;top:132.3px;">Navigation</div>
<div class="gl" style="left:684px;top:132.3px;">Zoom</div>
<div class="gl" style="left:760px;top:132.3px;">Page Background</div>
<div class="gl" style="left:803px;top:132.3px;">Export</div>
<div class="gl" style="left:829px;top:132.3px;">Close</div>
<div class="a" style="left:415.5px;top:132.5px;width:5px;height:5px;border:0.8px solid #bbb;border-radius:50%"></div><div class="a" style="left:417.3px;top:134.3px;width:1.6px;height:1.6px;background:#333"></div>
<svg style="left:122px;top:98.5px" width="16" height="12"><path d="M0.5 1.2Q0.5 0.4 1.3 0.4H4.8L5.9 1.7H11.5Q12.6 1.7 12.6 2.8V3.5H0.5Z" fill="#5f5f5f"/><path d="M0.5 3H2V11.5H0.5Z" fill="#5f5f5f"/><path d="M0.5 11.6L2 3.4H14.8L12.8 11.6Z" fill="#ffab0f"/></svg>
<div class="tl" style="left:128.5px;top:115px;">Open</div>
<svg style="left:145px;top:98.5px" width="13" height="12"><path d="M0.3 1.3Q0.3 0.3 1.3 0.3H9.6L11.8 2.5V10.6Q11.8 11.6 10.8 11.6H1.3Q0.3 11.6 0.3 10.6Z" fill="#1673de"/><rect x="1.8" y="1.5" width="7.2" height="3.4" fill="#fff"/><rect x="6.3" y="2.2" width="1.7" height="1.7" fill="#1673de"/><rect x="2.6" y="6.4" width="6.8" height="5.2" fill="#fff"/><path d="M3.8 8.2H8.2M3.8 10.1H8.2" stroke="#888" stroke-width="0.6"/></svg>
<div class="tl" style="left:151px;top:115px;">Save</div>
<svg style="left:170px;top:98px" width="14" height="13"><path d="M3 0.5H11V4H3Z" fill="none" stroke="#555" stroke-width="1"/><rect x="0.5" y="3.5" width="13" height="6.5" rx="1.5" fill="#5c5c5c"/><rect x="3" y="7" width="8" height="5.5" fill="#fff" stroke="#5c5c5c" stroke-width="0.9"/><path d="M4.5 9H9.5M4.5 10.8H9.5" stroke="#777" stroke-width="0.6"/><rect x="10.8" y="4.8" width="1.3" height="0.9" fill="#f0a020"/></svg>
<div class="tl" style="left:176.5px;top:115px;">Print</div>
<svg style="left:193px;top:98px" width="14" height="13"><path d="M3 0.5H11V4H3Z" fill="none" stroke="#555" stroke-width="1"/><rect x="0.5" y="3.5" width="13" height="6.5" rx="1.5" fill="#5c5c5c"/><rect x="3" y="7" width="8" height="5.5" fill="#fff" stroke="#5c5c5c" stroke-width="0.9"/><path d="M4.5 9H9.5M4.5 10.8H9.5" stroke="#777" stroke-width="0.6"/><rect x="10.8" y="4.8" width="1.3" height="0.9" fill="#f0a020"/></svg>
<svg style="left:201px;top:104.5px" width="7" height="7"><circle cx="3.4" cy="3.4" r="3.2" fill="#f5a623"/><path d="M4.2 0.9L1.7 3.9H3.2L2.4 6L5.1 2.8H3.6Z" fill="#fff"/></svg>
<div class="tl" style="left:199.5px;top:114.5px;">Quick<br>Print</div>
<svg style="left:216px;top:97px" width="17" height="15"><rect x="0" y="0" width="13" height="13" rx="1.2" fill="#c2c2c2"/><rect x="1.4" y="1.4" width="2.6" height="2.6" fill="#fff"/><rect x="5.3" y="1.4" width="2.6" height="2.6" fill="#fff"/><rect x="9.2" y="1.4" width="2.6" height="2.6" fill="#fff"/><rect x="1.4" y="5.3" width="2.6" height="2.6" fill="#fff"/><rect x="5.3" y="5.3" width="2.6" height="2.6" fill="#fff"/><rect x="9.2" y="5.3" width="2.6" height="2.6" fill="#fff"/><rect x="1.4" y="9.2" width="2.6" height="2.6" fill="#fff"/><rect x="5.3" y="9.2" width="2.6" height="2.6" fill="#fff"/><rect x="9.2" y="9.2" width="2.6" height="2.6" fill="#fff"/><circle cx="11.8" cy="11" r="3.9" fill="#fff"/><circle cx="11.8" cy="11" r="2.7" fill="none" stroke="#a6a6a6" stroke-width="2" stroke-dasharray="1.1 0.6"/><circle cx="11.8" cy="11" r="2.2" fill="#a6a6a6"/><circle cx="11.8" cy="11" r="1" fill="#fff"/></svg>
<div class="tl g" style="left:223.5px;top:115px;">Options</div>
<svg style="left:248.5px;top:97px" width="11" height="14"><rect x="0.7" y="1.5" width="9.6" height="11.5" rx="0.8" fill="#f4f4f4" stroke="#b0b0b0" stroke-width="1.1"/><rect x="3" y="0.3" width="5" height="2.2" rx="0.5" fill="#b0b0b0"/><path d="M3.6 5.3Q3.6 3.6 5.5 3.6Q7.4 3.6 7.4 5.2Q7.4 6.3 5.5 7V8.3" fill="none" stroke="#a8a8a8" stroke-width="1"/><rect x="5" y="9.3" width="1" height="1" fill="#a8a8a8"/></svg>
<div class="tl g" style="left:253.6px;top:115px;">Parameters</div>
<svg style="left:289px;top:98px" width="12" height="13"><rect x="0.5" y="0.5" width="10.5" height="11.5" rx="1.5" fill="#d2d2d2" stroke="#bdbdbd" stroke-width="0.8"/><rect x="2.3" y="2.3" width="7" height="1.6" fill="#a9a9a9"/><rect x="2.3" y="8.6" width="7" height="1.6" fill="#a9a9a9"/><rect x="2.3" y="4.6" width="7" height="3.3" fill="#e6e6e6"/></svg>
<div class="tl g" style="left:294.5px;top:115px;">Header/Footer</div>
<svg style="left:321px;top:98px" width="13" height="13"><rect x="0.5" y="0.5" width="12" height="11.5" rx="1" fill="#fff" stroke="#666" stroke-width="1"/><path d="M2.7 2.7L5.8 5.7M2.7 2.7V5.1M2.7 2.7H5.1M10.1 9.5L7.1 6.6M10.1 9.5V7.1M10.1 9.5H7.7" fill="none" stroke="#1e7ad8" stroke-width="1.1"/></svg>
<div class="tl" style="left:327.5px;top:115px;">Scale</div>
<svg style="left:325.9px;top:123px" width="4" height="3"><path d="M0 0H3.2L1.6 2Z" fill="#222"/></svg>
<svg style="left:345.5px;top:98px" width="12" height="12"><rect x="0.5" y="0.5" width="11" height="11.5" rx="1" fill="#f0f0f0" stroke="#6a6a6a" stroke-width="1"/><path d="M2.8 0.5V12M9.2 0.5V12M0.5 2.3H11.5M0.5 10.2H11.5" stroke="#1e7ad8" stroke-width="0.8"/></svg>
<div class="tl" style="left:351.5px;top:115px;">Margins</div>
<svg style="left:349.9px;top:123px" width="4" height="3"><path d="M0 0H3.2L1.6 2Z" fill="#222"/></svg>
<svg style="left:375px;top:97px" width="15" height="14"><path d="M0.5 0.5H5.5L8 3V10H0.5Z" fill="#fff" stroke="#555" stroke-width="0.9"/><path d="M3.5 5.5H11.5L14 8V13.5H3.5Z" fill="#fff" stroke="#555" stroke-width="0.9"/><path d="M5.5 8.6H10M5.5 10.6H11.5" stroke="#777" stroke-width="0.6"/></svg>
<div class="tl" style="left:381.5px;top:115px;">Orientation</div>
<svg style="left:379.9px;top:123px" width="4" height="3"><path d="M0 0H3.2L1.6 2Z" fill="#222"/></svg>
<svg style="left:403.5px;top:97.5px" width="13" height="13"><path d="M3.5 0.5H9L12 3.5V10H3.5Z" fill="#fff" stroke="#555" stroke-width="0.9"/><path d="M1 0.5V10M0 0.5H2M0 10H2" stroke="#1e7ad8" stroke-width="0.9"/><path d="M3 12.5Q7.5 10.5 12 12.5" fill="none" stroke="#1e7ad8" stroke-width="0.9"/></svg>
<div class="tl" style="left:410px;top:115px;">Size</div>
<svg style="left:408.4px;top:123px" width="4" height="3"><path d="M0 0H3.2L1.6 2Z" fill="#222"/></svg>
<svg style="left:428px;top:98.5px" width="16" height="12"><rect x="3.8" y="0.3" width="2.6" height="1.3" fill="#666"/><rect x="9.6" y="0.3" width="2.6" height="1.3" fill="#666"/><path d="M3.8 1.7H6.5V11.2H0.9Q0.4 10.6 0.9 9L3 3.5Z" fill="#5e5e5e"/><path d="M9.5 1.7H12.2L15 9Q15.5 10.6 15 11.2H9.5Z" fill="#5e5e5e"/><rect x="6.5" y="3.5" width="3" height="3.5" fill="#b0b0b0"/></svg>
<div class="tl" style="left:435.5px;top:115px;">Find</div>
<svg style="left:455px;top:98px" width="16" height="14"><rect x="0.5" y="0.7" width="3.7" height="5.2" rx="0.7" fill="none" stroke="#555" stroke-width="0.95"/><rect x="0.5" y="7.6" width="3.7" height="5.2" rx="0.7" fill="none" stroke="#555" stroke-width="0.95"/><rect x="6.7" y="0.5" width="8.6" height="12.5" rx="0.8" fill="none" stroke="#555" stroke-width="0.95"/></svg>
<div class="tl" style="left:463.5px;top:115px;">Thumbnails</div>
<svg style="left:490px;top:98px" width="13" height="12"><rect x="0.5" y="0.5" width="12" height="11" rx="1" fill="#c6c6c6"/><rect x="0.5" y="9" width="12" height="2.5" fill="#d8d8d8"/><path d="M5 0.5V6L6.5 4.8L8 6V0.5Z" fill="#9a9a9a"/></svg>
<div class="tl g" style="left:496.5px;top:115px;">Bookmarks</div>
<svg style="left:517.5px;top:98px" width="15" height="14"><rect x="0.5" y="0.5" width="12" height="3" fill="#cfcfcf" stroke="#a9a9a9" stroke-width="0.9"/><rect x="0.5" y="5" width="12" height="3" fill="#cfcfcf" stroke="#a9a9a9" stroke-width="0.9"/><path d="M10 8.5V13.5L11.2 12.3L12.5 14L13.3 13.4L12.2 11.8H14Z" fill="#b0b0b0"/></svg>
<div class="tl g" style="left:524px;top:114.5px;">Editing<br>Fields</div>
<svg style="left:545px;top:99.5px" width="10" height="10"><rect x="0" y="0" width="1.6" height="9" fill="#bdbdbd"/><path d="M9.5 0V9L2.5 4.5Z" fill="#bdbdbd"/></svg>
<div class="tl g" style="left:549.5px;top:114.5px;">First<br>Page</div>
<svg style="left:571px;top:99.5px" width="8" height="10"><path d="M7.5 0V9L0.5 4.5Z" fill="#bdbdbd"/></svg>
<div class="tl g" style="left:575px;top:114.5px;">Previous<br>Page</div>
<svg style="left:597.5px;top:99.5px" width="8" height="10"><path d="M0.5 0V9L7.5 4.5Z" fill="#bdbdbd"/></svg>
<div class="tl g" style="left:599.5px;top:114.5px;">Next<br>Page</div>
<svg style="left:618.5px;top:99.5px" width="10" height="10"><path d="M0 0V9L7 4.5Z" fill="#bdbdbd"/><rect x="7.8" y="0" width="1.6" height="9" fill="#bdbdbd"/></svg>
<div class="tl g" style="left:622.5px;top:114.5px;">Last<br>Page</div>
<div class="a" style="left:637px;top:95px;width:14.5px;height:11.5px;border:1px solid #d5d5d5;background:#f5f5f5"></div>
<svg style="left:642.5px;top:97.5px" width="5" height="7"><path d="M0.5 0.5V5.8L1.8 4.5L2.9 6.5L3.7 6L2.7 4.2H4.3Z" fill="#222"/></svg>
<svg style="left:641.5px;top:109px" width="7" height="7"><path d="M1.5 3.5V1.8Q2.2 1.2 2.8 1.8V3V0.8Q3.4 0.2 4 0.8V3V1.2Q4.6 0.6 5.2 1.2V3.5V2.5Q5.8 2 6.3 2.5V4.5Q6 6.5 4.5 6.5H3Q1.5 6.5 0.5 4.5Q0.8 3.8 1.5 4.3" fill="#fff" stroke="#555" stroke-width="0.6"/></svg>
<svg style="left:641.5px;top:119.5px" width="7" height="7"><circle cx="2.9" cy="2.9" r="2.2" fill="#a8d4f6" stroke="#6f94bd" stroke-width="0.8"/><path d="M4.5 4.5L6.5 6.5" stroke="#666" stroke-width="1.2"/></svg>
<svg style="left:664px;top:98px" width="12" height="13"><g fill="#e4e4e4" stroke="#aaa" stroke-width="0.9"><rect x="0.5" y="0.5" width="4.3" height="5.3" rx="0.5"/><rect x="6.5" y="0.5" width="4.3" height="5.3" rx="0.5"/><rect x="0.5" y="7.5" width="4.3" height="5.3" rx="0.5"/></g></svg>
<div class="tl g" style="left:670px;top:115px;">Many Pages</div>
<svg style="left:668.4px;top:123px" width="4" height="3"><path d="M0 0H3.2L1.6 2Z" fill="#888"/></svg>
<svg style="left:691.5px;top:97px" width="8" height="8"><circle cx="3" cy="3" r="2.3" fill="none" stroke="#777" stroke-width="0.8"/><path d="M4.7 4.7L7 7" stroke="#777" stroke-width="1"/><path d="M1.9 3H4.1" stroke="#777" stroke-width="0.6"/></svg>
<svg style="left:691.5px;top:108px" width="8" height="8"><circle cx="3" cy="3" r="2.3" fill="none" stroke="#777" stroke-width="0.8"/><path d="M4.7 4.7L7 7" stroke="#777" stroke-width="1"/></svg>
<svg style="left:691.5px;top:119.5px" width="8" height="8"><circle cx="3" cy="3" r="2.3" fill="none" stroke="#777" stroke-width="0.8"/><path d="M4.7 4.7L7 7" stroke="#777" stroke-width="1"/><path d="M1.9 3H4.1M3 1.9V4.1" stroke="#777" stroke-width="0.6"/></svg>
<div class="t" style="left:702px;top:98.6px;font-size:5.5px;color:#222">Zoom Out</div>
<div class="t" style="left:702px;top:109.5px;font-size:5.5px;color:#222">Zoom</div>
<svg style="left:717.9px;top:111px" width="4" height="3"><path d="M0 0H3.2L1.6 2Z" fill="#222"/></svg>
<div class="t" style="left:702px;top:120.8px;font-size:5.5px;color:#222">Zoom In</div>
<svg style="left:739.5px;top:101px" width="8" height="7"><path d="M1.5 3.5L4 1L6.5 3.5L4 6Z" fill="#888"/><path d="M0.5 5.5Q1.5 4.5 1 6.5" stroke="#e03030" stroke-width="1.2" fill="none"/><path d="M5 5.5L7.5 6.5" stroke="#e03030" stroke-width="1"/></svg>
<div class="t" style="left:748.8px;top:101.5px;font-size:5.4px;color:#222">Page Color</div>
<svg style="left:777.9px;top:104px" width="4" height="3"><path d="M0 0H3.2L1.6 2Z" fill="#222"/></svg>
<svg style="left:740.5px;top:115.5px" width="6" height="8"><path d="M0.5 0.5H3.5L5.5 2.5V7.5H0.5Z" fill="#9cc8f0" stroke="#666" stroke-width="0.6"/></svg>
<div class="t" style="left:749px;top:116.5px;font-size:5.4px;color:#222">Watermark</div>
<svg style="left:794px;top:99.5px" width="8" height="8"><rect x="0.5" y="0.5" width="7" height="7" fill="#fff" stroke="#bbb" stroke-width="0.6"/><rect x="0" y="1" width="8" height="3.5" fill="#e0303a"/><path d="M1.5 2.7H6.5" stroke="#fff" stroke-width="0.6"/></svg>
<svg style="left:808.1999999999999px;top:103.5px" width="4" height="3"><path d="M0 0H3.2L1.6 2Z" fill="#222"/></svg>
<svg style="left:794px;top:114.5px" width="8" height="8"><rect x="0.5" y="0.5" width="7" height="7" fill="#fff" stroke="#bbb" stroke-width="0.6"/><rect x="0" y="1" width="8" height="3.5" fill="#e0303a"/><path d="M1.5 2.7H6.5" stroke="#fff" stroke-width="0.6"/></svg>
<svg style="left:808.1999999999999px;top:118.5px" width="4" height="3"><path d="M0 0H3.2L1.6 2Z" fill="#222"/></svg>
<svg style="left:822px;top:96.5px" width="15" height="15"><circle cx="7.5" cy="7.5" r="7.3" fill="#d9121c"/><path d="M4.8 4.8L10.2 10.2M10.2 4.8L4.8 10.2" stroke="#fff" stroke-width="2"/></svg>
<div class="tl" style="left:829px;top:115px;">Close</div>
<div class="a" style="left:117px;top:139px;width:740px;height:1px;background:#d6d6d6"></div>
<div class="a" style="left:117px;top:140px;width:731px;height:344px;overflow:hidden" id="pv"><div style="position:absolute;left:-117px;top:-140px;width:980px;height:531px"><div class="a" style="left:333.5px;top:146px;width:298px;height:360px;border:1px solid #c9c9c9;border-radius:2px;background:#efefef"></div>
<div class="a" style="left:337.5px;top:150.5px;width:288.5px;height:360px;background:#fff;border:1px solid #d6d6d6"></div>
<div class="a" style="left:345.5px;top:151px;width:0;height:340px;border-left:1px dotted #e2e2e2"></div>
<div class="a" style="left:620px;top:151px;width:0;height:340px;border-left:1px dotted #e2e2e2"></div>
<div class="a" style="left:338px;top:158px;width:287px;height:0;border-top:1px dotted #d0d0d0"></div>
<div class="t" style="font-family:'Liberation Serif',serif;color:#111;left:355.5px;top:164.3px;font-size:8.2px;font-weight:bold">MekongSoft</div>
<div class="t" style="font-family:'Liberation Serif',serif;color:#111;left:355.5px;top:175.2px;font-size:8.15px">64 Nguyễn Đình Chiểu, Phường Đa Kao, Quận 1, HCM</div>
<div class="t" style="font-family:'Liberation Serif',serif;color:#111;left:355.5px;top:185.1px;font-size:8.15px">0901 000 508</div>
<div class="t c" style="font-family:'Liberation Serif',serif;color:#111;left:485.2px;top:195.2px;font-size:9.6px;font-weight:bold">TỔNG HỢP KẾT QUẢ KINH DOANH</div>
<div class="t c" style="font-family:'Liberation Serif',serif;color:#111;left:486.6px;top:207.7px;font-size:8.07px">Từ ngày 01/10/2023 đến ngày 13/10/2023</div>
<div class="a" style="left:354px;top:216px;width:262.1px;height:249.39999999999998px;border:1px solid #555"></div>
<div class="a" style="left:374.6px;top:216px;width:1px;height:248.39999999999998px;background:#555"></div>
<div class="a" style="left:517.3px;top:216px;width:1px;height:248.39999999999998px;background:#555"></div>
<div class="a" style="left:585.1px;top:216px;width:1px;height:248.39999999999998px;background:#555"></div>
<div class="a" style="left:354px;top:226.9px;width:261.1px;height:1px;background:#555"></div>
<div class="t c" style="font-family:'Liberation Serif',serif;color:#111;left:364.8px;top:218.2px;font-size:8px;font-weight:bold">Stt</div>
<div class="t c" style="font-family:'Liberation Serif',serif;color:#111;left:446.45px;top:218.2px;font-size:8px;font-weight:bold">Nội dung</div>
<div class="t c" style="font-family:'Liberation Serif',serif;color:#111;left:551.7px;top:218.2px;font-size:8px;font-weight:bold">Số tiền</div>
<div class="t c" style="font-family:'Liberation Serif',serif;color:#111;left:600.6px;top:218.2px;font-size:8px;font-weight:bold">Đơn vị</div>
<div class="t c" style="font-family:'Liberation Serif',serif;color:#111;left:364.8px;top:229.20px;font-size:8.1px">1</div>
<div class="t" style="font-family:'Liberation Serif',serif;color:#111;left:375.8px;top:229.20px;font-size:8.1px">Doanh số bán hàng</div>
<div class="t" style="font-family:'Liberation Serif',serif;color:#111;right:396.1px;top:229.20px;font-size:8.1px">0</div>
<div class="t" style="font-family:'Liberation Serif',serif;color:#111;right:366.20000000000005px;top:229.20px;font-size:8.1px">Đồng</div>
<div class="a" style="left:354px;top:237.70px;width:261.1px;height:1px;background:#555"></div>
<div class="t c" style="font-family:'Liberation Serif',serif;color:#111;left:364.8px;top:240.00px;font-size:8.1px">2</div>
<div class="t" style="font-family:'Liberation Serif',serif;color:#111;left:375.8px;top:240.00px;font-size:8.1px">Tiền hàng khách trả lại</div>
<div class="t" style="font-family:'Liberation Serif',serif;color:#111;right:396.1px;top:240.00px;font-size:8.1px">186,000</div>
<div class="t" style="font-family:'Liberation Serif',serif;color:#111;right:366.20000000000005px;top:240.00px;font-size:8.1px">Đồng</div>
<div class="a" style="left:354px;top:248.49px;width:261.1px;height:1px;background:#555"></div>
<div class="t c" style="font-family:'Liberation Serif',serif;color:#111;left:364.8px;top:250.79px;font-size:8.1px">3</div>
<div class="t" style="font-family:'Liberation Serif',serif;color:#111;left:375.8px;top:250.79px;font-size:8.1px">Doanh số bán hàng còn lại (1-2)</div>
<div class="t" style="font-family:'Liberation Serif',serif;color:#111;right:396.1px;top:250.79px;font-size:8.1px">-186,000</div>
<div class="t" style="font-family:'Liberation Serif',serif;color:#111;right:366.20000000000005px;top:250.79px;font-size:8.1px">Đồng</div>
<div class="a" style="left:354px;top:259.29px;width:261.1px;height:1px;background:#555"></div>
<div class="t c" style="font-family:'Liberation Serif',serif;color:#111;left:364.8px;top:261.59px;font-size:8.1px">4</div>
<div class="t" style="font-family:'Liberation Serif',serif;color:#111;left:375.8px;top:261.59px;font-size:8.1px">Tổng giá vốn bán hàng</div>
<div class="t" style="font-family:'Liberation Serif',serif;color:#111;right:396.1px;top:261.59px;font-size:8.1px">-164,000</div>
<div class="t" style="font-family:'Liberation Serif',serif;color:#111;right:366.20000000000005px;top:261.59px;font-size:8.1px">Đồng</div>
<div class="a" style="left:354px;top:270.08px;width:261.1px;height:1px;background:#555"></div>
<div class="t c" style="font-family:'Liberation Serif',serif;color:#111;left:364.8px;top:272.38px;font-size:8.1px">5</div>
<div class="t" style="font-family:'Liberation Serif',serif;color:#111;left:375.8px;top:272.38px;font-size:8.1px">Tổng lợi nhuận bán hàng (3-4)</div>
<div class="t" style="font-family:'Liberation Serif',serif;color:#111;right:396.1px;top:272.38px;font-size:8.1px">-22,000</div>
<div class="t" style="font-family:'Liberation Serif',serif;color:#111;right:366.20000000000005px;top:272.38px;font-size:8.1px">Đồng</div>
<div class="a" style="left:354px;top:280.88px;width:261.1px;height:1px;background:#555"></div>
<div class="t c" style="font-family:'Liberation Serif',serif;color:#111;left:364.8px;top:283.18px;font-size:8.1px">6</div>
<div class="t" style="font-family:'Liberation Serif',serif;color:#111;left:375.8px;top:283.18px;font-size:8.1px">Tỷ suất lợi nhuận bán hàng (5*100/1)</div>
<div class="t" style="font-family:'Liberation Serif',serif;color:#111;right:396.1px;top:283.18px;font-size:8.1px">12</div>
<div class="t" style="font-family:'Liberation Serif',serif;color:#111;right:366.20000000000005px;top:283.18px;font-size:8.1px">%</div>
<div class="a" style="left:354px;top:291.67px;width:261.1px;height:1px;background:#555"></div>
<div class="t c" style="font-family:'Liberation Serif',serif;color:#111;left:364.8px;top:293.97px;font-size:8.1px">7</div>
<div class="t" style="font-family:'Liberation Serif',serif;color:#111;left:375.8px;top:293.97px;font-size:8.1px">Thực thu tiền bán hàng + khách đặt cọc</div>
<div class="t" style="font-family:'Liberation Serif',serif;color:#111;right:396.1px;top:293.97px;font-size:8.1px">0</div>
<div class="t" style="font-family:'Liberation Serif',serif;color:#111;right:366.20000000000005px;top:293.97px;font-size:8.1px">Đồng</div>
<div class="a" style="left:354px;top:302.47px;width:261.1px;height:1px;background:#555"></div>
<div class="t c" style="font-family:'Liberation Serif',serif;color:#111;left:364.8px;top:304.77px;font-size:8.1px">8</div>
<div class="t" style="font-family:'Liberation Serif',serif;color:#111;left:375.8px;top:304.77px;font-size:8.1px">Tỷ lệ thu tiền so với doanh số bán hàng</div>
<div class="t" style="font-family:'Liberation Serif',serif;color:#111;right:396.1px;top:304.77px;font-size:8.1px">0</div>
<div class="t" style="font-family:'Liberation Serif',serif;color:#111;right:366.20000000000005px;top:304.77px;font-size:8.1px">%</div>
<div class="a" style="left:354px;top:313.26px;width:261.1px;height:1px;background:#555"></div>
<div class="t c" style="font-family:'Liberation Serif',serif;color:#111;left:364.8px;top:315.56px;font-size:8.1px">9</div>
<div class="t" style="font-family:'Liberation Serif',serif;color:#111;left:375.8px;top:315.56px;font-size:8.1px">Tổng doanh thu khác</div>
<div class="t" style="font-family:'Liberation Serif',serif;color:#111;right:396.1px;top:315.56px;font-size:8.1px">0</div>
<div class="t" style="font-family:'Liberation Serif',serif;color:#111;right:366.20000000000005px;top:315.56px;font-size:8.1px">Đồng</div>
<div class="a" style="left:354px;top:324.06px;width:261.1px;height:1px;background:#555"></div>
<div class="t c" style="font-family:'Liberation Serif',serif;color:#111;left:364.8px;top:326.36px;font-size:8.1px">10</div>
<div class="t" style="font-family:'Liberation Serif',serif;color:#111;left:375.8px;top:326.36px;font-size:8.1px">Tổng chi phí khác</div>
<div class="t" style="font-family:'Liberation Serif',serif;color:#111;right:396.1px;top:326.36px;font-size:8.1px">0</div>
<div class="t" style="font-family:'Liberation Serif',serif;color:#111;right:366.20000000000005px;top:326.36px;font-size:8.1px">Đồng</div>
<div class="a" style="left:354px;top:334.85px;width:261.1px;height:1px;background:#555"></div>
<div class="t c" style="font-family:'Liberation Serif',serif;color:#111;left:364.8px;top:337.15px;font-size:8.1px">11</div>
<div class="t" style="font-family:'Liberation Serif',serif;color:#111;left:375.8px;top:337.15px;font-size:8.1px">Tổng lợi nhuận khác</div>
<div class="t" style="font-family:'Liberation Serif',serif;color:#111;right:396.1px;top:337.15px;font-size:8.1px">0</div>
<div class="t" style="font-family:'Liberation Serif',serif;color:#111;right:366.20000000000005px;top:337.15px;font-size:8.1px">Đồng</div>
<div class="a" style="left:354px;top:345.65px;width:261.1px;height:1px;background:#555"></div>
<div class="t c" style="font-family:'Liberation Serif',serif;color:#111;left:364.8px;top:347.95px;font-size:8.1px">12</div>
<div class="t" style="font-family:'Liberation Serif',serif;color:#111;left:375.8px;top:347.95px;font-size:8.1px">Trả tiền hàng khách trả lại</div>
<div class="t" style="font-family:'Liberation Serif',serif;color:#111;right:396.1px;top:347.95px;font-size:8.1px">0</div>
<div class="t" style="font-family:'Liberation Serif',serif;color:#111;right:366.20000000000005px;top:347.95px;font-size:8.1px">Đồng</div>
<div class="a" style="left:354px;top:356.45px;width:261.1px;height:1px;background:#555"></div>
<div class="t c" style="font-family:'Liberation Serif',serif;color:#111;left:364.8px;top:358.75px;font-size:8.1px">13</div>
<div class="t" style="font-family:'Liberation Serif',serif;color:#111;left:375.8px;top:358.75px;font-size:8.1px">Khách hàng còn nợ</div>
<div class="t" style="font-family:'Liberation Serif',serif;color:#111;right:396.1px;top:358.75px;font-size:8.1px">9,702,000</div>
<div class="t" style="font-family:'Liberation Serif',serif;color:#111;right:366.20000000000005px;top:358.75px;font-size:8.1px">Đồng</div>
<div class="a" style="left:354px;top:367.24px;width:261.1px;height:1px;background:#555"></div>
<div class="t c" style="font-family:'Liberation Serif',serif;color:#111;left:364.8px;top:369.54px;font-size:8.1px">14</div>
<div class="t" style="font-family:'Liberation Serif',serif;color:#111;left:375.8px;top:369.54px;font-size:8.1px">Tổng tiền nhập hàng nhà cung cấp</div>
<div class="t" style="font-family:'Liberation Serif',serif;color:#111;right:396.1px;top:369.54px;font-size:8.1px">0</div>
<div class="t" style="font-family:'Liberation Serif',serif;color:#111;right:366.20000000000005px;top:369.54px;font-size:8.1px">Đồng</div>
<div class="a" style="left:354px;top:378.04px;width:261.1px;height:1px;background:#555"></div>
<div class="t c" style="font-family:'Liberation Serif',serif;color:#111;left:364.8px;top:380.34px;font-size:8.1px">15</div>
<div class="t" style="font-family:'Liberation Serif',serif;color:#111;left:375.8px;top:380.34px;font-size:8.1px">Trả tiền mua hàng nhà cung cấp</div>
<div class="t" style="font-family:'Liberation Serif',serif;color:#111;right:396.1px;top:380.34px;font-size:8.1px">300,000,000</div>
<div class="t" style="font-family:'Liberation Serif',serif;color:#111;right:366.20000000000005px;top:380.34px;font-size:8.1px">Đồng</div>
<div class="a" style="left:354px;top:388.83px;width:261.1px;height:1px;background:#555"></div>
<div class="t c" style="font-family:'Liberation Serif',serif;color:#111;left:364.8px;top:391.13px;font-size:8.1px">16</div>
<div class="t" style="font-family:'Liberation Serif',serif;color:#111;left:375.8px;top:391.13px;font-size:8.1px">Hàng trả lại nhà cung cấp</div>
<div class="t" style="font-family:'Liberation Serif',serif;color:#111;right:396.1px;top:391.13px;font-size:8.1px">80,000</div>
<div class="t" style="font-family:'Liberation Serif',serif;color:#111;right:366.20000000000005px;top:391.13px;font-size:8.1px">Đồng</div>
<div class="a" style="left:354px;top:399.63px;width:261.1px;height:1px;background:#555"></div>
<div class="t c" style="font-family:'Liberation Serif',serif;color:#111;left:364.8px;top:401.93px;font-size:8.1px">17</div>
<div class="t" style="font-family:'Liberation Serif',serif;color:#111;left:375.8px;top:401.93px;font-size:8.1px">Thu lại tiền xuất trả hàng nhà cung cấp</div>
<div class="t" style="font-family:'Liberation Serif',serif;color:#111;right:396.1px;top:401.93px;font-size:8.1px">0</div>
<div class="t" style="font-family:'Liberation Serif',serif;color:#111;right:366.20000000000005px;top:401.93px;font-size:8.1px">Đồng</div>
<div class="a" style="left:354px;top:410.42px;width:261.1px;height:1px;background:#555"></div>
<div class="t c" style="font-family:'Liberation Serif',serif;color:#111;left:364.8px;top:412.72px;font-size:8.1px">18</div>
<div class="t" style="font-family:'Liberation Serif',serif;color:#111;left:375.8px;top:412.72px;font-size:8.1px">Còn nợ tiền nhà cung cấp</div>
<div class="t" style="font-family:'Liberation Serif',serif;color:#111;right:396.1px;top:412.72px;font-size:8.1px">2,193,616,000</div>
<div class="t" style="font-family:'Liberation Serif',serif;color:#111;right:366.20000000000005px;top:412.72px;font-size:8.1px">Đồng</div>
<div class="a" style="left:354px;top:421.22px;width:261.1px;height:1px;background:#555"></div>
<div class="t c" style="font-family:'Liberation Serif',serif;color:#111;left:364.8px;top:423.52px;font-size:8.1px">19</div>
<div class="t" style="font-family:'Liberation Serif',serif;color:#111;left:375.8px;top:423.52px;font-size:8.1px">Tổng hợp lãi lỗ  (5 + 11)</div>
<div class="t" style="font-family:'Liberation Serif',serif;color:#111;right:396.1px;top:423.52px;font-size:8.1px">-22,000</div>
<div class="t" style="font-family:'Liberation Serif',serif;color:#111;right:366.20000000000005px;top:423.52px;font-size:8.1px">Đồng</div>
<div class="a" style="left:354px;top:432.01px;width:261.1px;height:1px;background:#555"></div>
<div class="t c" style="font-family:'Liberation Serif',serif;color:#111;left:364.8px;top:434.31px;font-size:8.1px">20</div>
<div class="t" style="font-family:'Liberation Serif',serif;color:#111;left:375.8px;top:434.31px;font-size:8.1px">Tiền mặt</div>
<div class="t" style="font-family:'Liberation Serif',serif;color:#111;right:396.1px;top:434.31px;font-size:8.1px">-125,780,400</div>
<div class="t" style="font-family:'Liberation Serif',serif;color:#111;right:366.20000000000005px;top:434.31px;font-size:8.1px">Đồng</div>
<div class="a" style="left:354px;top:442.81px;width:261.1px;height:1px;background:#555"></div>
<div class="t c" style="font-family:'Liberation Serif',serif;color:#111;left:364.8px;top:445.11px;font-size:8.1px">21</div>
<div class="t" style="font-family:'Liberation Serif',serif;color:#111;left:375.8px;top:445.11px;font-size:8.1px">Argibank</div>
<div class="t" style="font-family:'Liberation Serif',serif;color:#111;right:396.1px;top:445.11px;font-size:8.1px">1,079,000,000</div>
<div class="t" style="font-family:'Liberation Serif',serif;color:#111;right:366.20000000000005px;top:445.11px;font-size:8.1px">Đồng</div>
<div class="a" style="left:354px;top:453.60px;width:261.1px;height:1px;background:#555"></div>
<div class="t c" style="font-family:'Liberation Serif',serif;color:#111;left:364.8px;top:455.90px;font-size:8.1px">22</div>
<div class="t" style="font-family:'Liberation Serif',serif;color:#111;left:375.8px;top:455.90px;font-size:8.1px">MekongSoft</div>
<div class="t" style="font-family:'Liberation Serif',serif;color:#111;right:396.1px;top:455.90px;font-size:8.1px">955,910,000</div>
<div class="t" style="font-family:'Liberation Serif',serif;color:#111;right:366.20000000000005px;top:455.90px;font-size:8.1px">Đồng</div>
<div class="t c" style="font-family:'Liberation Serif',serif;color:#111;left:539px;top:466.6px;font-size:8.1px">Người lập phiếu</div>
<div class="t c" style="font-family:'Liberation Serif',serif;color:#111;left:539px;top:474.3px;font-size:7.6px;font-style:italic">(Ký, ghi rõ họ tên)</div>
<svg style="left:563px;top:334.8px" width="8" height="11"><path d="M0.6 0.5V8.3L2.4 6.6L4 9.6L5.2 9L3.7 6.1H6.3Z" fill="#fff" stroke="#888" stroke-width="0.8" stroke-linejoin="round"/></svg></div></div>
<div class="a" style="left:848px;top:140px;width:0;height:344px;border-left:1px dotted #d5d5d5"></div>
<svg style="left:850.5px;top:144.5px" width="5" height="3"><path d="M0 2.5H4L2 0Z" fill="#222"/></svg>
<div class="a" style="left:849px;top:150px;width:7.5px;height:262px;border:1px solid #d9d9d9;background:repeating-linear-gradient(135deg,#f3f3f3 0 1px,#fcfcfc 1px 2.5px)"></div>
<svg style="left:850.5px;top:479.5px" width="5" height="3"><path d="M0 0H4L2 2.5Z" fill="#222"/></svg>
<div class="a" style="left:117px;top:484px;width:731px;height:0;border-top:1px dotted #e0e0e0"></div>
<svg style="left:120px;top:487.5px" width="3" height="4"><path d="M2.5 0V3.5L0 1.75Z" fill="#aaa"/></svg>
<svg style="left:843px;top:487.5px" width="3" height="4"><path d="M0 0V3.5L2.5 1.75Z" fill="#aaa"/></svg>
<div class="a" style="left:117px;top:492.5px;width:740px;height:0;border-top:1px dotted #d8d8d8"></div>
<div class="t" style="left:120.5px;top:497.6px;font-size:5.5px;color:#222">Page 1 of 1</div>
<div class="a" style="left:153px;top:494px;width:0;height:12px;border-left:1px dotted #d5d5d5"></div>
<div class="a" style="left:745px;top:494px;width:0;height:12px;border-left:1px dotted #d5d5d5"></div>
<div class="t" style="left:751px;top:497.9px;font-size:5.3px;color:#222">100%</div>
<svg style="left:770px;top:495px" width="75" height="10"><circle cx="5" cy="5" r="3.4" fill="#fff" stroke="#555" stroke-width="0.7"/><path d="M3.3 5H6.7" stroke="#222" stroke-width="0.8"/><path d="M8.4 5H33" stroke="#666" stroke-width="0.7"/><path d="M40 5H65" stroke="#bbb" stroke-width="0.6" stroke-dasharray="0.8 1.2"/><circle cx="36" cy="5" r="3.4" fill="#fff" stroke="#666" stroke-width="0.8"/><circle cx="36" cy="5" r="2" fill="none" stroke="#666" stroke-width="0.6"/><circle cx="68.5" cy="5" r="3.4" fill="#fff" stroke="#555" stroke-width="0.7"/><path d="M66.8 5H70.2M68.5 3.3V6.7" stroke="#222" stroke-width="0.8"/></svg>
<svg style="left:849px;top:500px" width="6" height="6"><path d="M5.5 0.5V5.5H0.5Z" fill="#d5d5d5"/></svg>
</body></html>
